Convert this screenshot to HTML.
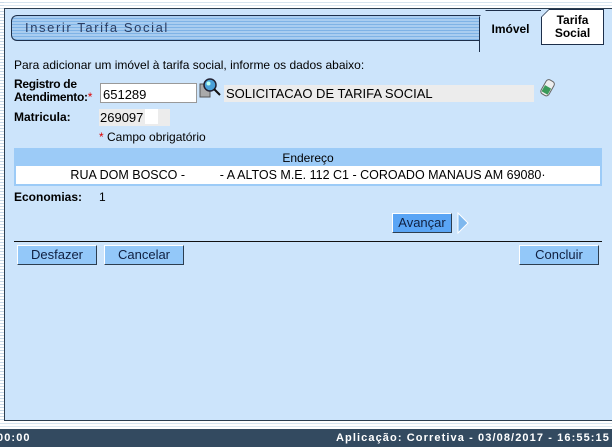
<!DOCTYPE html>
<html><head><meta charset="utf-8"><style>
*{margin:0;padding:0;box-sizing:border-box}
body{width:612px;height:447px;overflow:hidden;background:#fff;font-family:"Liberation Sans",Arial,sans-serif;font-size:12px;color:#000;position:relative}
.a{position:absolute}
.strip{left:0;top:0;width:4px;height:429px;background:repeating-linear-gradient(#fff 0,#fff 2px,#c9d9e8 2px,#c9d9e8 3px)}
.top{left:0;top:0;width:612px;height:8px;background:linear-gradient(#fff 0,#fff 2px,#d6e4ef 2px,#d6e4ef 3px,#fff 3px,#fff 5px,#dbe7f1 5px,#dbe7f1 6px,#fff 6px)}
.panel{left:4px;top:8px;width:612px;height:413px;background:#cce4fb;border:1px solid #2c3e50;border-right:none}
.title{left:11px;top:15px;width:470px;height:26px;border:1px solid #1d2f4a;border-right:none;border-radius:6px 0 0 6px;background:repeating-linear-gradient(#a9cdf0 0,#a9cdf0 2px,#7fb3e6 2px,#7fb3e6 3px);color:#2a3d62;font-size:13px;letter-spacing:1.6px;padding:4px 0 0 13px}
.tab1{left:479px;top:10px;width:62px;height:42px;border-left:1px solid #1d2f4a;border-top:1px solid #1d2f4a;background:#cce4fb;font-weight:bold;font-size:12px;text-align:center;padding-top:11px;clip-path:polygon(7px 0,100% 0,100% 100%,0 100%,0 7px)}
.tab2{left:541px;top:9px;width:63px;height:36px;background:#1d2f4a;clip-path:polygon(8px 0,100% 0,100% 100%,0 100%,0 8px)}
.tab2 div{position:absolute;left:1px;top:1px;right:1px;bottom:1px;background:#fff;clip-path:polygon(7px 0,100% 0,100% 100%,0 100%,0 7px);font-weight:bold;font-size:12px;text-align:center;line-height:13px;padding-top:4px}
.lbl{font-weight:bold}
.btn{height:20px;background:#93c8f9;border:1px solid;border-color:#fff #2c3e50 #2c3e50 #fff;text-align:center;font-size:13px;line-height:17px;color:#102040}
.foot{left:0;top:429px;width:612px;height:18px;background:#334a60;color:#fff;font-weight:bold;font-size:11px;letter-spacing:1.1px;line-height:18px}
</style></head><body>
<div class="a top"></div>
<div class="a strip"></div>
<div class="a panel"></div>
<div class="a" style="left:0;top:421px;width:612px;height:8px;background:linear-gradient(#fff 0,#fff 2px,#d6e4ef 2px,#d6e4ef 3px,#fff 3px,#fff 5px,#dbe7f1 5px,#dbe7f1 6px,#fff 6px)"></div>
<div class="a title">Inserir Tarifa Social</div>
<div class="a tab1">Imóvel</div>
<div class="a tab2"><div>Tarifa<br>Social</div></div>

<div class="a" style="left:14px;top:58px">Para adicionar um imóvel à tarifa social, informe os dados abaixo:</div>
<div class="a lbl" style="left:14px;top:78px;line-height:13px;letter-spacing:-0.3px;white-space:nowrap">Registro de<br>Atendimento:<span style="color:#d00;font-weight:normal">*</span></div>
<div class="a" style="left:100px;top:83px;width:97px;height:20px;background:#fff;border:1px solid #999;font-size:13px;padding:3px 0 0 2px">651289</div>
<svg class="a" style="left:199px;top:77px" width="24" height="22" viewBox="0 0 24 22"><rect x="1" y="7" width="10" height="13" fill="#aaa" stroke="#555"/><circle cx="11" cy="8" r="6" fill="#4aa0d8" stroke="#223" stroke-width="1.5"/><circle cx="9.5" cy="6.5" r="2" fill="#bfe"/><line x1="15" y1="12" x2="21" y2="18" stroke="#111" stroke-width="2"/></svg>
<div class="a" style="left:224px;top:85px;width:310px;height:17px;background:#ececec;font-size:13px;line-height:17px;padding-left:2px">SOLICITACAO DE TARIFA SOCIAL</div>
<svg class="a" style="left:539px;top:78px" width="18" height="20" viewBox="0 0 18 20"><g transform="rotate(30 9 10)"><rect x="4" y="2" width="9" height="16" rx="3" fill="#eee" stroke="#666"/><rect x="5" y="9" width="7" height="7" fill="#3a9a5a"/></g></svg>
<div class="a lbl" style="left:14px;top:110px">Matricula:</div>
<div class="a" style="left:99px;top:109px;width:71px;height:17px;background:#ececec;font-size:13px;line-height:17px;padding-left:1px">269097<span style="display:inline-block;width:13px;height:15px;background:#fff;vertical-align:top;margin-left:2px"></span></div>
<div class="a" style="left:99px;top:130px"><span style="color:#d00">*</span> Campo obrigatório</div>

<div class="a" style="left:14px;top:148px;width:588px;height:38px;background:#9ccbf7"></div>
<div class="a" style="left:14px;top:151px;width:588px;text-align:center">Endereço</div>
<div class="a" style="left:16px;top:166px;width:584px;height:18px;background:#fff;text-align:center;font-size:12.5px;line-height:18px">RUA DOM BOSCO -&nbsp;&nbsp;&nbsp;&nbsp;&nbsp;&nbsp;&nbsp;&nbsp;&nbsp; - A ALTOS M.E. 112 C1 - COROADO MANAUS AM 69080·</div>
<div class="a lbl" style="left:14px;top:190px">Economias:</div>
<div class="a" style="left:99px;top:190px">1</div>

<div class="a btn" style="left:392px;top:213px;width:60px;background:#5aa5f5">Avançar</div>
<svg class="a" style="left:457px;top:212px" width="12" height="22"><polygon points="1,1 11,11 1,21" fill="#7fb8ee" stroke="#fff"/></svg>
<div class="a" style="left:14px;top:241px;width:588px;height:1px;background:#111"></div>
<div class="a btn" style="left:17px;top:245px;width:80px">Desfazer</div>
<div class="a btn" style="left:104px;top:245px;width:80px">Cancelar</div>
<div class="a btn" style="left:519px;top:245px;width:80px">Concluir</div>

<div class="a foot"><span style="position:absolute;left:-3px">00:00</span><span style="position:absolute;right:2px">Aplicação: Corretiva - 03/08/2017 - 16:55:15</span></div>
</body></html>
